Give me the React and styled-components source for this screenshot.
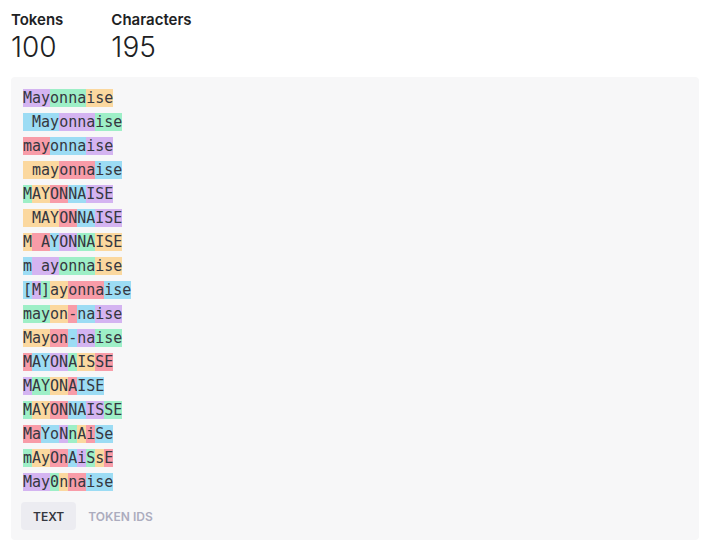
import React, { useState } from "react";
import styled, { createGlobalStyle } from "styled-components";

const GlobalStyle = createGlobalStyle`
  body {
    margin: 0;
    background: #ffffff;
    font-family: Inter, "Noto Sans", sans-serif;
    color: #202123;
  }
`;

const COLORS = ["#d4b4f1", "#9eefc7", "#fbd89f", "#f89ca8", "#9cdcf4"];

// each line split as the tokenizer splits it, the newline between lines is a token too
const LINES = [
  ["May", "onna", "ise"],
  [" May", "onna", "ise"],
  ["may", "onna", "ise"],
  [" may", "onna", "ise"],
  ["M", "AY", "ON", "NA", "ISE"],
  [" MAY", "ON", "NA", "ISE"],
  ["M", " A", "Y", "ON", "NA", "ISE"],
  ["m", " ay", "onna", "ise"],
  ["[", "M", "]", "ay", "onna", "ise"],
  ["may", "on", "-", "na", "ise"],
  ["May", "on", "-", "na", "ise"],
  ["M", "AY", "ON", "A", "IS", "SE"],
  ["M", "AY", "ON", "A", "ISE"],
  ["M", "AY", "ON", "NA", "IS", "SE"],
  ["Ma", "Yo", "N", "n", "A", "i", "Se"],
  ["m", "Ay", "On", "A", "i", "S", "s", "E"],
  ["May", "0", "n", "na", "ise"],
];

const Page = styled.div`
  padding: 10px 10px 7px 11px;
`;

const Stats = styled.div`
  display: flex;
  gap: 48px;
  margin-bottom: 12px;
`;

const Stat = styled.div`
  display: flex;
  flex-direction: column;
`;

const StatLabel = styled.div`
  font-size: 15px;
  font-weight: 600;
  line-height: 20px;
  color: #202123;
`;

const StatValue = styled.div`
  font-size: 28px;
  font-weight: 300;
  line-height: 35px;
  color: #202123;
`;

const Panel = styled.div`
  background: #f7f7f8;
  border-radius: 4px;
  padding: 9px 10px 10px;
`;

const TokenText = styled.pre`
  margin: 0 0 8px;
  padding: 0 2px;
  font-family: "DejaVu Sans Mono", "Liberation Mono", monospace;
  font-size: 15px;
  line-height: 24px;
  color: #353740;
  white-space: pre-wrap;
`;

const Token = styled.span`
  background: ${(p) => p.color};
`;

const Tabs = styled.div`
  display: flex;
`;

const Tab = styled.button`
  border: none;
  border-radius: 4px;
  padding: 0 12px;
  height: 28px;
  font-family: Inter, "Noto Sans", sans-serif;
  font-size: 12px;
  font-weight: 600;
  cursor: pointer;
  background: ${(p) => (p.active ? "#ececf1" : "transparent")};
  color: ${(p) => (p.active ? "#353740" : "#acacbe")};
`;

export default function App() {
  const [tab, setTab] = useState("text");
  let n = 0;
  const parts = [];
  LINES.forEach((line, li) => {
    line.forEach((t, ti) => {
      parts.push(
        <Token key={`${li}-${ti}`} color={COLORS[n % 5]}>
          {t}
        </Token>
      );
      n++;
    });
    if (li < LINES.length - 1) {
      parts.push(
        <Token key={`${li}-nl`} color={COLORS[n % 5]}>
          {"\n"}
        </Token>
      );
      n++;
    }
  });
  const chars = LINES.reduce((s, l) => s + l.join("").length, 0) + LINES.length - 1;

  return (
    <>
      <GlobalStyle />
      <Page>
        <Stats>
          <Stat>
            <StatLabel>Tokens</StatLabel>
            <StatValue>{n}</StatValue>
          </Stat>
          <Stat>
            <StatLabel>Characters</StatLabel>
            <StatValue>{chars}</StatValue>
          </Stat>
        </Stats>
        <Panel>
          <TokenText>{parts}</TokenText>
          <Tabs>
            <Tab active={tab === "text"} onClick={() => setTab("text")}>
              TEXT
            </Tab>
            <Tab active={tab === "ids"} onClick={() => setTab("ids")}>
              TOKEN IDS
            </Tab>
          </Tabs>
        </Panel>
      </Page>
    </>
  );
}
